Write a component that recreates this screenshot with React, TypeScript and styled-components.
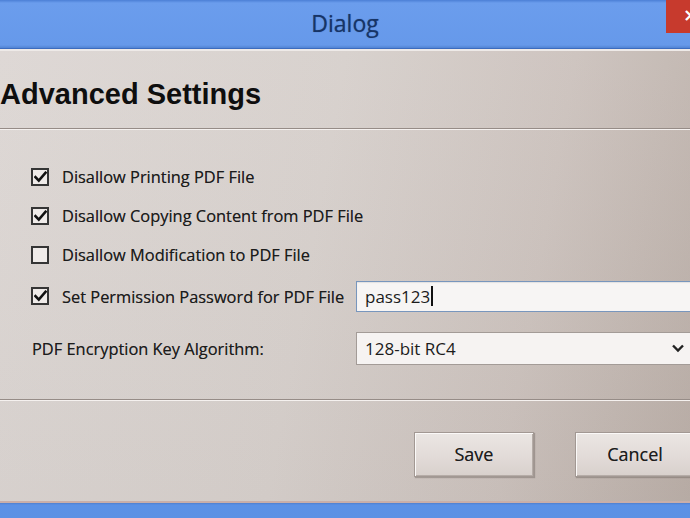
import React from "react";
import styled, { createGlobalStyle } from "styled-components";

const GlobalStyle = createGlobalStyle`
  html, body {
    margin: 0;
    padding: 0;
    overflow: hidden;
    background: #cfc6c1;
  }
  * {
    box-sizing: border-box;
  }
`;

const Window = styled.div`
  width: 690px;
  height: 518px;
  display: flex;
  flex-direction: column;
  overflow: hidden;
  font-family: "Open Sans", "Noto Sans", sans-serif;
  color: #1c1c1c;
`;

const TitleBar = styled.div`
  height: 49px;
  flex: none;
  display: grid;
  grid-template-columns: 1fr auto 1fr;
  align-items: start;
  background: linear-gradient(180deg, #4b7fd6 0px, #6b9ded 3px, #6699ea 45px, #4a7ccc 49px);
  border-bottom: 1px solid #3c6cbf;
`;

const Title = styled.div`
  grid-column: 2;
  height: 48px;
  display: flex;
  align-items: center;
  font-size: 23px;
  color: #173466;
  text-shadow: 0 0 1px rgba(23, 52, 102, 0.6);
  padding-bottom: 2px;
`;

const CloseButton = styled.div`
  grid-column: 3;
  justify-self: end;
  width: 24px;
  height: 33px;
  overflow: hidden;
  background: #c73a2d;
  color: #fff;
  font-family: "DejaVu Sans", sans-serif;
  font-weight: bold;
  font-size: 18px;
  line-height: 30px;
  padding-left: 17px;
  white-space: nowrap;
`;

const Content = styled.div`
  flex: 1;
  display: flex;
  flex-direction: column;
  border-top: 2px solid #eeeae8;
  border-bottom: 2px solid #c9aea9;
  background:
    linear-gradient(180deg, rgba(255, 255, 255, 0.06), rgba(0, 0, 0, 0.02)),
    linear-gradient(100deg, #dcd6d3 0%, #d6cfcb 45%, #cbc1bc 75%, #baaea7 100%);
`;

const Header = styled.div`
  padding: 26px 0 17px 0;
`;

const Heading = styled.h1`
  margin: 0;
  font-family: "Liberation Sans", Arial, sans-serif;
  font-weight: bold;
  font-size: 29px;
  line-height: 34px;
  color: #0e0e0e;
`;

const Divider = styled.div`
  height: 2px;
  flex: none;
  border-top: 1px solid #968c87;
  border-bottom: 1px solid #f5f1ef;
`;

const Options = styled.div`
  padding: 27px 0 28px 31px;
  display: flex;
  flex-direction: column;
`;

const Row = styled.div<{ $height: number; $gap?: number }>`
  height: ${(p) => p.$height}px;
  margin-top: ${(p) => p.$gap ?? 0}px;
  display: flex;
  align-items: center;
`;

const CheckLabel = styled.label<{ $width?: number }>`
  display: flex;
  align-items: center;
  gap: 13px;
  width: ${(p) => (p.$width ? `${p.$width}px` : "auto")};
  font-size: 16.4px;
  text-shadow: 0 0 0.6px rgba(0, 0, 0, 0.5);
  cursor: default;
`;

const Box = styled.span`
  width: 18px;
  height: 18px;
  flex: none;
  display: flex;
  align-items: center;
  justify-content: center;
  border: 2px solid #353535;
  background: #efebe9;
`;

const PlainLabel = styled.span`
  width: 325px;
  padding-left: 1px;
  font-size: 16.4px;
  text-shadow: 0 0 0.6px rgba(0, 0, 0, 0.5);
`;

const TextField = styled.div`
  flex: 1;
  margin-right: -20px;
  height: 31px;
  display: flex;
  align-items: center;
  padding-left: 8px;
  font-size: 17px;
  background: #f7f5f4;
  border: 1.5px solid #7896bd;
  box-shadow: inset 0 1px 1px rgba(0, 0, 0, 0.08);
`;

const Caret = styled.span`
  width: 1.5px;
  height: 20px;
  margin-left: 1px;
  background: #111;
`;

const SelectBox = styled.div`
  flex: 1;
  margin-right: -2px;
  height: 33px;
  display: flex;
  align-items: center;
  justify-content: space-between;
  padding: 0 6px 0 8px;
  font-size: 17px;
  background: #f6f3f2;
  border: 1.5px solid #a39b97;
`;

const Footer = styled.div`
  padding-top: 31px;
  margin-right: -5px;
  display: flex;
  justify-content: flex-end;
  gap: 41px;
`;

const Button = styled.button`
  width: 120px;
  height: 45px;
  font-family: "Open Sans", "Noto Sans", sans-serif;
  font-size: 18px;
  color: #1c1c1c;
  text-shadow: 0 0 0.6px rgba(0, 0, 0, 0.5);
  background: linear-gradient(180deg, #ebe6e3 0%, #e2dbd8 55%, #d8d0cc 100%);
  border: 1px solid #a29893;
  box-shadow:
    inset 1px 1px 0 #fbf9f8,
    inset -1px -1px 0 #b5aca7,
    1px 1px 1px rgba(90, 80, 75, 0.35);
  padding: 0 0 2px 0;
`;

const BottomBar = styled.div`
  height: 15px;
  flex: none;
  background: linear-gradient(180deg, #4f7fcf 0px, #5b91e6 2px, #5c91e4 15px);
`;

function CheckMark() {
  return (
    <svg width="13" height="12" viewBox="0 0 13 12">
      <path
        d="M1.5 6.2 L4.8 9.6 L11.5 1.8"
        fill="none"
        stroke="#111"
        strokeWidth="2.6"
        strokeLinecap="square"
        strokeLinejoin="miter"
      />
    </svg>
  );
}

function Chevron() {
  return (
    <svg width="14" height="10" viewBox="0 0 14 10">
      <path d="M2 2.5 L7 7.5 L12 2.5" fill="none" stroke="#222" strokeWidth="2.4" />
    </svg>
  );
}

function Check({ checked, label, width }: { checked: boolean; label: string; width?: number }) {
  return (
    <CheckLabel $width={width}>
      <Box>{checked && <CheckMark />}</Box>
      {label}
    </CheckLabel>
  );
}

export default function App() {
  return (
    <>
      <GlobalStyle />
      <Window>
        <TitleBar>
          <Title>Dialog</Title>
          <CloseButton>×</CloseButton>
        </TitleBar>
        <Content>
          <Header>
            <Heading>Advanced Settings</Heading>
          </Header>
          <Divider />
          <Options>
            <Row $height={39}>
              <Check checked label="Disallow Printing PDF File" />
            </Row>
            <Row $height={39}>
              <Check checked label="Disallow Copying Content from PDF File" />
            </Row>
            <Row $height={39}>
              <Check checked={false} label="Disallow Modification to PDF File" />
            </Row>
            <Row $height={44}>
              <Check checked label="Set Permission Password for PDF File" width={325} />
              <TextField>
                pass123
                <Caret />
              </TextField>
            </Row>
            <Row $height={46} $gap={7}>
              <PlainLabel>PDF Encryption Key Algorithm:</PlainLabel>
              <SelectBox>
                128-bit RC4
                <Chevron />
              </SelectBox>
            </Row>
          </Options>
          <Divider />
          <Footer>
            <Button>Save</Button>
            <Button>Cancel</Button>
          </Footer>
        </Content>
        <BottomBar />
      </Window>
    </>
  );
}
